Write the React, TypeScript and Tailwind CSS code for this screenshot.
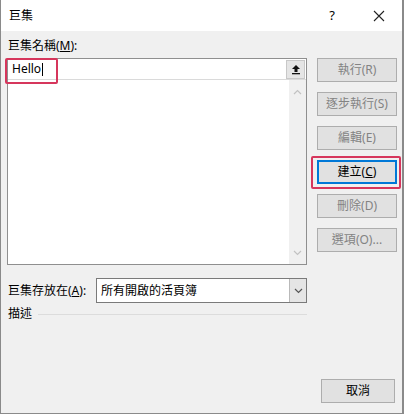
import React from 'react';

const FONT = { fontFamily: '"Noto Sans", "Noto Sans CJK TC", sans-serif' };

const SideButton = ({ label, hot, rest = '', enabled = false, focused = false }: { label: string; hot: string; rest?: string; enabled?: boolean; focused?: boolean }) => (
  <div
    className={`h-[24px] w-[80px] flex items-center justify-center text-[12px] leading-none bg-[#e1e1e1] ${
      focused ? 'border-2 border-[#0078d7] text-black' : 'border border-[#adadad] text-[#838383]'
    } ${enabled && !focused ? 'text-black' : ''}`}
  >
    <span>
      {label}({focused ? <span className="underline">{hot}</span> : hot}){rest}
    </span>
  </div>
);

const Chevron = ({ down = false, color = '#c2c2c2' }: { down?: boolean; color?: string }) => (
  <svg width="9" height="6" viewBox="0 0 9 6">
    <path d={down ? 'M1 1 L4.5 4.5 L8 1' : 'M1 5 L4.5 1.5 L8 5'} fill="none" stroke={color} strokeWidth="1.2" />
  </svg>
);

export default function App() {
  return (
    <div style={FONT} className="w-[404px] h-[414px] flex flex-col border-l border-r-2 border-b border-[#8a8a8a] bg-[#f0f0f0] text-black">
      {/* title bar */}
      <div className="h-[31px] bg-white flex items-center shrink-0">
        <span className="ml-[8px] text-[12px]">巨集</span>
        <span className="ml-auto mr-[38px] text-[13px]">?</span>
        <svg width="12" height="12" viewBox="0 0 12 12" className="mr-[17px]">
          <path d="M1 1 L11 11 M11 1 L1 11" stroke="#222" strokeWidth="1.1" />
        </svg>
      </div>

      <div className="relative flex-1 flex pl-[6px]">
        {/* left column */}
        <div className="w-[300px] flex flex-col">
          <div className="h-[16px] mt-[7px] mb-[4px] ml-[1px] text-[12px] leading-[16px]">
            巨集名稱(<span className="underline">M</span>):
          </div>
          <div className="border border-[#8f8f8f] bg-white">
            <div className="h-[21px] flex items-center border-b border-[#dadada]">
              <span className="ml-[4px] text-[12px] leading-none">Hello</span>
              <span className="w-px h-[13px] bg-black ml-[1px]" />
              <div className="ml-auto mr-[1px] w-[19px] h-[19px] bg-[#e5e5e5] border border-[#c8c8c8] flex items-center justify-center">
                <svg width="10" height="11" viewBox="0 0 10 11">
                  <path d="M5 1 L9 5 L6.5 5 L6.5 8 L3.5 8 L3.5 5 L1 5 Z" fill="#111" />
                  <rect x="1" y="9" width="8" height="1.3" fill="#111" />
                </svg>
              </div>
            </div>
            <div className="h-[184px] flex">
              <div className="flex-1" />
              <div className="w-[17px] bg-[#f0f0f0] flex flex-col items-center justify-between pt-[9px] pb-[8px]">
                <Chevron />
                <Chevron down />
              </div>
            </div>
          </div>

          <div className="mt-[13px] flex items-center">
            <span className="ml-[1px] w-[88px] text-[12px]">
              巨集存放在(<span className="underline">A</span>):
            </span>
            <div className="flex-1 h-[25px] border border-[#7a7a7a] bg-white flex items-center">
              <span className="ml-[4px] text-[12px]">所有開啟的活頁簿</span>
              <div className="ml-auto h-full w-[17px] bg-[#e5e5e5] border-l border-[#b9b9b9] flex items-center justify-center">
                <Chevron down color="#555" />
              </div>
            </div>
          </div>

          <div className="mt-[2px] flex items-center h-[18px]">
            <span className="ml-[1px] text-[12px]">描述</span>
            <div className="ml-[6px] flex-1 h-px bg-[#dcdcdc]" />
          </div>
        </div>

        {/* right column */}
        <div className="ml-[10px] pt-[27px] flex flex-col gap-[10px]">
          <SideButton label="執行" hot="R" />
          <SideButton label="逐步執行" hot="S" />
          <SideButton label="編輯" hot="E" />
          <SideButton label="建立" hot="C" focused />
          <SideButton label="刪除" hot="D" />
          <SideButton label="選項" hot="O" rest="..." />
        </div>

        {/* cancel */}
        <div className="absolute right-[7px] bottom-[10px] w-[74px] h-[24px] bg-[#e1e1e1] border border-[#adadad] flex items-center justify-center text-[12px]">
          取消
        </div>

        {/* annotation boxes */}
        <div className="absolute left-[4px] top-[27px] w-[53px] h-[26px] border-2 border-[#d6365c] rounded-[2px]" />
        <div className="absolute left-[310px] top-[125px] w-[90px] h-[33px] border-2 border-[#d6365c] rounded-[2px]" />
      </div>
    </div>
  );
}
